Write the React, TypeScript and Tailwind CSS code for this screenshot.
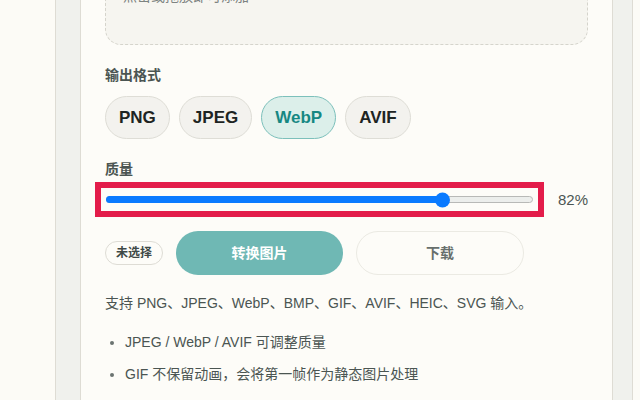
import React from "react";

const formats = ["PNG", "JPEG", "WebP", "AVIF"];

const QualitySlider = ({ value }: { value: number }) => {
  // range is 10..100, thumb travels inside the track
  const pct = (value - 10) / 90;
  return (
    <div className="relative h-[7px] w-full rounded-full border border-[#b8b9b7] bg-[#eceeec]">
      <div
        className="absolute left-[-1px] top-[-1px] h-[7px] rounded-full bg-[#0a7aff]"
        style={{ width: `calc(7px + ${pct} * (100% - 15px))` }}
      />
      <div
        className="absolute top-1/2 h-[15px] w-[15px] -translate-y-1/2 rounded-full bg-[#0a7aff]"
        style={{ left: `calc(${pct} * (100% - 15px))` }}
      />
    </div>
  );
};

export default function App() {
  const active = "WebP";
  const quality = 82;

  return (
    <div className="h-[400px] w-full overflow-hidden bg-[#fcfbf6] font-[family-name:'Liberation_Sans','Noto_Sans_CJK_SC',sans-serif] text-[#4b5552]">
      <div className="ml-[55px] flex h-full w-[578px] flex-col border-x border-[#dedcd4] bg-[#f0f1ed] pl-[24px] pr-[19px]">
        <div className="flex flex-1 flex-col border-x border-[#dedcd4] bg-[#fdfcf8] px-6">
          <div className="-mt-[60px] flex h-[105px] shrink-0 flex-col justify-end rounded-b-[16px] border border-dashed border-[#d5d4cc] bg-[#f6f5f0] px-[17px] pb-[38px]">
            <p className="text-[14px] leading-5 text-[#7d8381]">点击或拖放即可添加</p>
          </div>

          <p className="mt-[20px] text-[14px] font-bold leading-5">输出格式</p>
          <div className="mt-[11px] flex gap-[9px]">
            {formats.map((f) => (
              <button
                key={f}
                className={
                  f === active
                    ? "h-[43px] rounded-full border border-[#7cc0bb] bg-[#dcefea] px-[13px] text-[17px] font-bold text-[#168883]"
                    : "h-[43px] rounded-full border border-[#deddd6] bg-[#f3f2ee] px-[13px] text-[17px] font-bold text-[#1d2422]"
                }
              >
                {f}
              </button>
            ))}
          </div>

          <p className="mt-[20px] text-[14px] font-bold leading-5">质量</p>
          <div className="mt-[3px] flex items-center justify-between">
            <div className="-ml-[10px] flex h-[35px] w-[449px] items-center border-[6px] border-[#e31c4a] px-[5px]">
              <QualitySlider value={quality} />
            </div>
            <span className="text-[15px] leading-5">{quality}%</span>
          </div>

          <div className="mt-[14px] flex items-center gap-[13px]">
            <span className="flex h-[24px] items-center rounded-full border border-[#dedcd5] px-[10px] text-[12px] font-bold text-[#3f4947]">
              未选择
            </span>
            <button className="h-[44px] w-[167px] rounded-full bg-[#6fb8b4] text-[14px] font-bold text-white">
              转换图片
            </button>
            <button className="h-[44px] w-[168px] rounded-full border border-[#ebeae3] bg-[#fdfcf8] text-[14px] font-bold text-[#676f6c]">
              下载
            </button>
          </div>

          <p className="mt-[18px] text-[14px] leading-5">
            支持 PNG、JPEG、WebP、BMP、GIF、AVIF、HEIC、SVG 输入。
          </p>
          <ul className="mt-[19px] list-disc space-y-3 pl-5 text-[14px] leading-5 marker:text-[#6b7371]">
            <li>JPEG / WebP / AVIF 可调整质量</li>
            <li>GIF 不保留动画，会将第一帧作为静态图片处理</li>
          </ul>
        </div>
      </div>
    </div>
  );
}
